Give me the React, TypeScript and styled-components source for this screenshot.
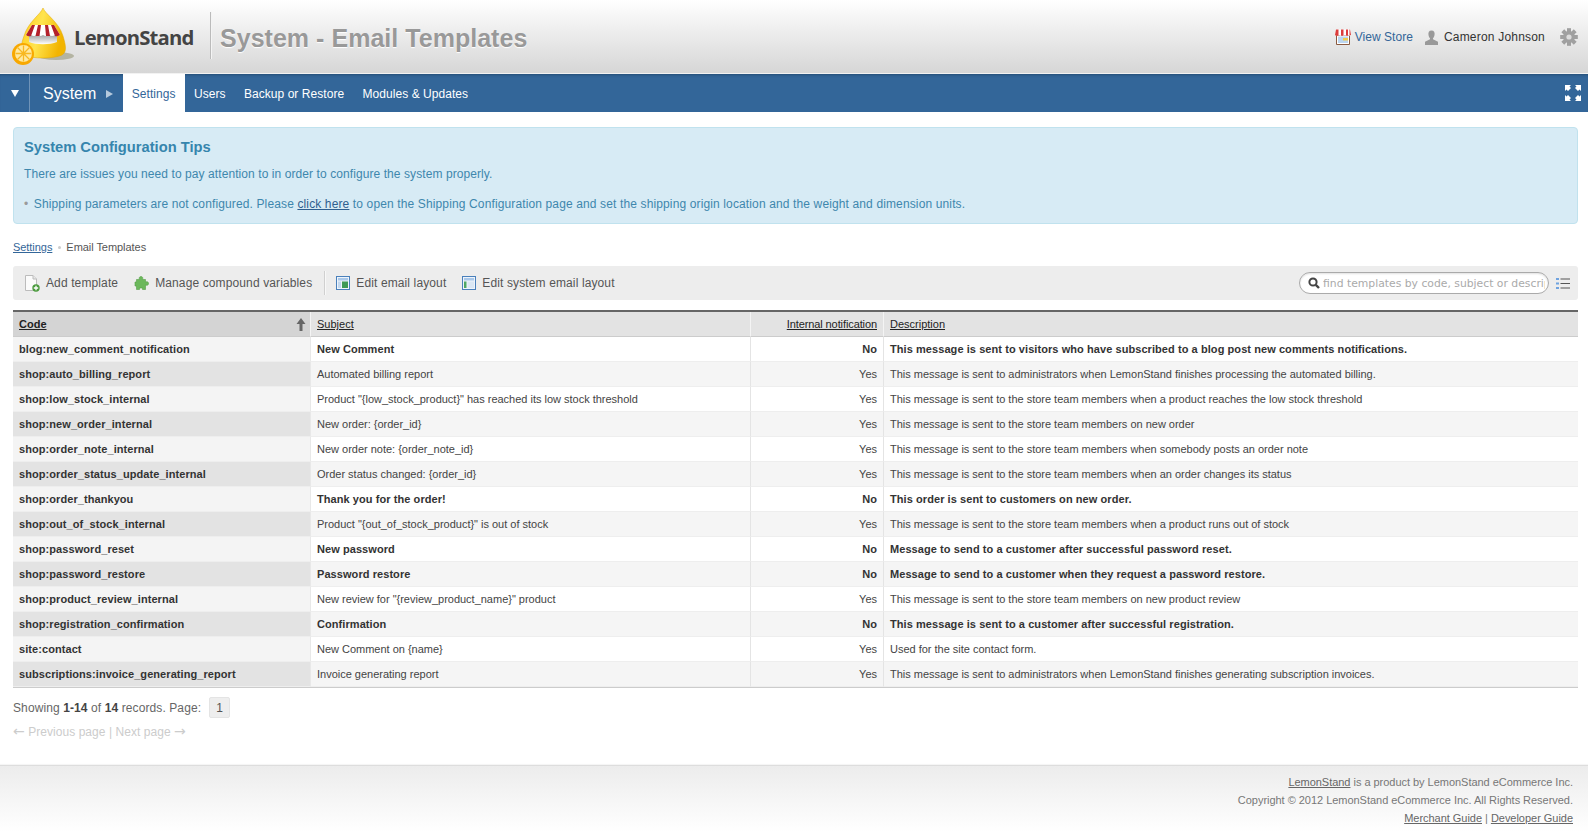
import React from "react";
import styled, { createGlobalStyle } from "styled-components";

const Global = createGlobalStyle`
  html, body { margin: 0; padding: 0; background: #fff; }
  body { font-family: "Liberation Sans", Arial, sans-serif; font-size: 12px; color: #444; }
`;

const Page = styled.div`
  width: 1588px; height: 832px; display: flex; flex-direction: column; overflow: hidden;
`;
const Header = styled.header`
  height: 73px; flex: none; display: flex; align-items: flex-start; justify-content: space-between;
  background: linear-gradient(#ffffff, #d6d6d6); border-bottom: 1px solid #f2f2f2; box-sizing: content-box;
`;
const Brand = styled.div`display: flex; align-items: flex-start; padding: 8px 0 0 12px;`;
const LogoText = styled.div`
  font-family: "Open Sans", "Liberation Sans", sans-serif; font-weight: 700; font-size: 20.3px; letter-spacing: -0.8px;
  color: #444; margin: 17px 0 0 0; line-height: 24px; width: 122px;
`;
const Divider = styled.div`width: 1px; height: 47px; background: #bbb; margin: 4px 0 0 14px; box-shadow: 1px 0 0 #f4f4f4;`;
const Title = styled.h1`
  margin: 14px 0 0 9px; font-size: 25px; line-height: 32px; font-weight: 700; color: #999; letter-spacing: .03px; text-shadow: 0 1px 1px #fff;
`;
const UserArea = styled.div`display: flex; align-items: center; height: 18px; margin: 28px 0 0 0; padding-right: 10px;`;
const StoreLink = styled.a`color: #336699; font-size: 12px; margin: 0 11px 0 4px; text-decoration: none; letter-spacing: .05px;`;
const UserName = styled.span`color: #333; font-size: 12px; margin: 0 15px 0 5px; letter-spacing: .2px;`;

const Nav = styled.nav`
  height: 38px; flex: none; display: flex; align-items: stretch; background: #336699; position: relative;
  box-shadow: inset 0 3px 3px -2px #244c75;
`;
const NavToggle = styled.div`
  width: 29px; display: flex; align-items: center; justify-content: center; border-right: 1px solid #6f93b8;
`;
const NavToggleArrow = styled.span`width: 0; height: 0; border-top: 7px solid #fff; border-left: 4px solid transparent; border-right: 4px solid transparent;`;
const NavSection = styled.div`
  display: flex; align-items: center; color: #fff; font-size: 16px; padding: 2px 0 0 13px; width: 80px; box-sizing: content-box;
  gap: 10px;
`;
const NavArrow = styled.span`width: 0; height: 0; border-left: 7px solid #b5c9dd; border-top: 4px solid transparent; border-bottom: 4px solid transparent;`;
const NavTab = styled.a<{ $active?: boolean }>`
  display: flex; align-items: center; padding: 2px 9.6px 0 8.8px; font-size: 12px; text-decoration: none; letter-spacing: .05px;
  color: ${(p) => (p.$active ? "#336699" : "#fff")}; background: ${(p) => (p.$active ? "#fff" : "transparent")};
`;
const NavExpand = styled.div`margin-left: auto; display: flex; align-items: center; padding-right: 7px;`;

const Content = styled.main`flex: 1; padding: 15px 10px 0 13px; display: flex; flex-direction: column;`;
const Tips = styled.section`
  height: 97px; box-sizing: border-box; background: #d7ebf5; border: 1px solid #c0e2ee; border-radius: 4px;
  padding: 11px 10px 0; color: #3e87ad;
`;
const TipsTitle = styled.h2`margin: 0; font-size: 14.7px; line-height: 17px; color: #3585ad; font-weight: 700;`;
const TipsText = styled.p`margin: 11px 0 0; font-size: 12px; line-height: 15px; letter-spacing: .08px; & + & { margin-top: 15px; letter-spacing: .13px; }`;
const TipsBullet = styled.span`color: #9a9a9a; margin-right: 2px;`;
const TipsLink = styled.a`color: #2f5f8f; text-decoration: underline;`;

const Crumbs = styled.div`margin-top: 16px; height: 14px; line-height: 14px; font-size: 11px; color: #555; display: flex; align-items: center; letter-spacing: -.05px;`;
const CrumbLink = styled.a`color: #336699; text-decoration: underline;`;
const CrumbDot = styled.span`width: 3px; height: 3px; border-radius: 50%; background: #ccc; margin: 0 5px 0 6px;`;

const Toolbar = styled.div`
  margin-top: 12px; height: 34px; background: #ededed; border-radius: 3px; display: flex; align-items: center; padding-left: 12px; flex: none;
`;
const ToolButton = styled.a`
  display: flex; align-items: center; gap: 6px; color: #555; font-size: 12px; margin-right: 16px; white-space: nowrap; letter-spacing: .12px;
`;
const ToolSep = styled.div`width: 1px; height: 24px; background: #d0d0d0; margin: 0 11px 0 -4px; box-shadow: 1px 0 0 #f8f8f8;`;
const ToolRight = styled.div`margin-left: auto; display: flex; align-items: center; padding-right: 8px;`;
const Search = styled.div`
  width: 250px; height: 22px; box-sizing: border-box; border: 1px solid #aaa; border-radius: 11px; background: #fff;
  display: flex; align-items: center; padding: 0 3px 0 8px; overflow: hidden; margin-right: 7px;
  box-shadow: inset 0 1px 2px rgba(0,0,0,.12);
`;
const SearchText = styled.span`
  font-family: "DejaVu Sans", sans-serif; font-size: 10.8px; color: #aaa; margin: 1px 0 0 3px; white-space: nowrap; overflow: hidden; flex: 1;
`;

const Table = styled.table`
  margin-top: 10px; width: 1565px; border-collapse: separate; border-spacing: 0; table-layout: fixed; border-top: 2px solid #666; border-bottom: 1px solid #ccc; flex: none;
`;
const Th = styled.th<{ $sorted?: boolean; $right?: boolean }>`
  height: 25px; box-sizing: border-box; padding: 0 6px; font-size: 11px; font-weight: ${(p) => (p.$sorted ? 700 : 400)};
  color: #222; text-decoration: underline; text-align: ${(p) => (p.$right ? "right" : "left")};
  letter-spacing: ${(p) => (p.$right ? "-.1px" : "0")};
  background: ${(p) => (p.$sorted ? "#d4d4d4" : "#e3e3e3")}; border-bottom: 1px solid #ccc; border-right: 1px solid #f4f4f4;
  position: relative; &:last-child { border-right: 0; }
`;
const SortArrow = styled.span`position: absolute; right: 4px; top: 6px; line-height: 0;`;
const CodeCell = styled.td<{ $odd: boolean }>`
  height: 25px; box-sizing: border-box; padding: 0 6px; font-size: 11px; font-weight: 700; color: #333; white-space: nowrap; letter-spacing: .07px;
  background: ${(p) => (p.$odd ? "#f4f4f4" : "#e3e3e3")}; border-bottom: 1px solid #eee; border-right: 1px solid #e8e8e8;
`;
const Td = styled.td<{ $odd: boolean; $bold: boolean; $right?: boolean }>`
  height: 25px; box-sizing: border-box; padding: 0 6px; font-size: 11px; white-space: nowrap; overflow: hidden;
  font-weight: ${(p) => (p.$bold ? 700 : 400)}; color: ${(p) => (p.$bold ? "#333" : "#444")};
  letter-spacing: ${(p) => (p.$bold ? ".07px" : "-.01px")}; text-align: ${(p) => (p.$right ? "right" : "left")};
  background: ${(p) => (p.$odd ? "#fff" : "#f5f5f5")}; border-bottom: 1px solid #eee; border-right: 1px solid #e4e4e4;
  &:last-child { border-right: 0; }
`;

const Pager = styled.div`margin-top: 9px; display: flex; align-items: center; height: 21px; color: #666; font-size: 12px; gap: 4px; letter-spacing: .1px;`;
const PagerStrong = styled.b`color: #444;`;
const PageBox = styled.span`
  width: 21px; height: 21px; background: #eee; border: 1px solid #e4e4e4; border-radius: 2px; box-sizing: border-box; margin-left: 4px;
  display: flex; align-items: center; justify-content: center; color: #555;
`;
const PrevNext = styled.div`margin-top: 6px; color: #ccc; font-size: 12px; line-height: 15px; letter-spacing: .05px;`;
const PagerArrow = styled.span`font-family: "DejaVu Sans", sans-serif; font-size: 14px; line-height: 14px;`;

const Footer = styled.footer`
  height: 67px; flex: none; box-sizing: border-box; border-top: 1px solid #ddd; background: linear-gradient(#ececec, #fff);
  text-align: right; padding: 7px 15px 0 0; font-size: 11px; line-height: 18px; color: #777; letter-spacing: -.03px;
  box-shadow: 0 -1px 1px rgba(0,0,0,.04);
`;
const FooterLink = styled.a`color: #666; text-decoration: underline;`;

type Row = [string, string, string, string];
const rows: Row[] = [
  ["blog:new_comment_notification", "New Comment", "No", "This message is sent to visitors who have subscribed to a blog post new comments notifications."],
  ["shop:auto_billing_report", "Automated billing report", "Yes", "This message is sent to administrators when LemonStand finishes processing the automated billing."],
  ["shop:low_stock_internal", 'Product "{low_stock_product}" has reached its low stock threshold', "Yes", "This message is sent to the store team members when a product reaches the low stock threshold"],
  ["shop:new_order_internal", "New order: {order_id}", "Yes", "This message is sent to the store team members on new order"],
  ["shop:order_note_internal", "New order note: {order_note_id}", "Yes", "This message is sent to the store team members when somebody posts an order note"],
  ["shop:order_status_update_internal", "Order status changed: {order_id}", "Yes", "This message is sent to the store team members when an order changes its status"],
  ["shop:order_thankyou", "Thank you for the order!", "No", "This order is sent to customers on new order."],
  ["shop:out_of_stock_internal", 'Product "{out_of_stock_product}" is out of stock', "Yes", "This message is sent to the store team members when a product runs out of stock"],
  ["shop:password_reset", "New password", "No", "Message to send to a customer after successful password reset."],
  ["shop:password_restore", "Password restore", "No", "Message to send to a customer when they request a password restore."],
  ["shop:product_review_internal", 'New review for "{review_product_name}" product', "Yes", "This message is sent to the store team members on new product review"],
  ["shop:registration_confirmation", "Confirmation", "No", "This message is sent to a customer after successful registration."],
  ["site:contact", "New Comment on {name}", "Yes", "Used for the site contact form."],
  ["subscriptions:invoice_generating_report", "Invoice generating report", "Yes", "This message is sent to administrators when LemonStand finishes generating subscription invoices."],
];

const LemonLogo = () => (
  <svg width="62" height="58" viewBox="0 0 62 58">
    <defs>
      <linearGradient id="lg" x1="0" x2="1" y1="0" y2="0.3">
        <stop offset="0" stopColor="#ffc91a" /><stop offset="0.5" stopColor="#ffe44e" /><stop offset="1" stopColor="#f2b400" />
      </linearGradient>
      <linearGradient id="wh" x1="0" x2="0" y1="0" y2="1"><stop offset="0" stopColor="#8f8f8f" /><stop offset="1" stopColor="#fff" /></linearGradient>
    </defs>
    <ellipse cx="44" cy="48" rx="18" ry="4" fill="#8f8f70" opacity=".55" />
    <path d="M31 0 C33 6 47 14 51 28 C54 38 55 44 50 47 C42 51 20 51 12 47 C8 44 9 36 12 28 C16 14 29 6 31 0 Z" fill="url(#lg)" stroke="#e3a800" strokeWidth=".5" />
    <path d="M17 25 H45 V34 C38 37 24 37 17 34 Z" fill="url(#wh)" />
    <path d="M14 27 L20 17 H42 L48 27 Q45 29 43 27 Q40 29 37 27 Q34 29 31 27 Q28 29 25 27 Q22 29 19 27 Q16 29 14 27 Z" fill="#fff" />
    <path d="M14 27 L20 17 H23 L19 28 Q16 29 14 27 Z M26 17 H29 L27.5 28 H23.5 Z M33 17 H36 L38 28 H34 Z M39 17 H42 L48 27 Q45 29 43 28 Z" fill="#b4202a" />
    <circle cx="11" cy="46" r="11" fill="#f8a800" />
    <circle cx="11.5" cy="45.5" r="8.5" fill="#ffe9a0" />
    <path d="M11.5 37.5 V53.5 M3.5 45.5 H19.5 M5.5 39.5 L17.5 51.5 M17.5 39.5 L5.5 51.5" stroke="#f8b820" strokeWidth="1.3" />
  </svg>
);

const StoreIcon = () => (
  <svg width="16" height="16" viewBox="0 0 16 16">
    <path d="M1.5 6 H14.5 V15.5 H1.5 Z" fill="#fff" stroke="#8a5a40" />
    <rect x="3" y="7.5" width="10" height="6.5" fill="#bcd6f0" />
    <rect x="8" y="9" width="5" height="2.5" fill="#f0cc50" />
    <path d="M1 .5 H15 L16 6 Q14.5 7.5 13 6 Q11.5 7.5 10 6 Q8.5 7.5 7 6 Q5.5 7.5 4 6 Q2 7.5 0 6 Z" fill="#fff" />
    <path d="M1 .5 H3.5 V6.5 Q1.5 7.5 0 6 Z M6 .5 H8.5 V6.5 Q7 7.2 6 6.5 Z M11 .5 H13 V6.5 Q12 7 11 6.5 Z M14.5 .5 H15 L16 6 L14.5 6.5 Z" fill="#dc3c3c" />
  </svg>
);
const UserIcon = () => (
  <svg width="15" height="15" viewBox="0 0 15 15">
    <path d="M7.5 0.5 C10 0.5 11 2.5 10.5 5 C10.3 6.5 9.6 7.6 9 8.2 V9.3 L14 11.7 V15 H1 V11.7 L6 9.3 V8.2 C5.4 7.6 4.7 6.5 4.5 5 C4 2.5 5 0.5 7.5 0.5 Z" fill="#999" />
  </svg>
);
const GearIcon = () => (
  <svg width="18" height="18" viewBox="0 0 18 18">
    <g fill="#a0a0a0">
      {[0, 45, 90, 135, 180, 225, 270, 315].map((a) => (
        <rect key={a} x="7" y="0.2" width="4" height="4.5" transform={`rotate(${a} 9 9)`} />
      ))}
    </g>
    <circle cx="9" cy="9" r="6" fill="#a0a0a0" />
    <circle cx="9" cy="9" r="2.6" fill="#dcdcdc" />
  </svg>
);
const ExpandIcon = () => (
  <svg width="16" height="16" viewBox="0 0 16 16" fill="#fff">
    <path d="M0 0 H6 L4.5 1.5 L6 3 L3 6 L1.5 4.5 L0 6 Z" />
    <path d="M16 0 V6 L14.5 4.5 L13 6 L10 3 L11.5 1.5 L10 0 Z" />
    <path d="M0 16 V10 L1.5 11.5 L3 10 L6 13 L4.5 14.5 L6 16 Z" />
    <path d="M16 16 H10 L11.5 14.5 L10 13 L13 10 L14.5 11.5 L16 10 Z" />
  </svg>
);
const AddIcon = () => (
  <svg width="15" height="17" viewBox="0 0 15 17">
    <path d="M.5 .5 H8 L11.5 4 V15.5 H.5 Z" fill="#fbfbfb" stroke="#bcbcbc" />
    <path d="M8 .5 V4 H11.5" fill="#e8e8e8" stroke="#bcbcbc" />
    <circle cx="11" cy="13" r="3.7" fill="#4a9a3c" />
    <path d="M11 10.8 V15.2 M8.8 13 H13.2" stroke="#fff" strokeWidth="1.3" />
  </svg>
);
const PuzzleIcon = () => (
  <svg width="15" height="15" viewBox="0 0 15 15">
    <path d="M2.5 3.5 H5.5 C4.8 2.2 5.2 .6 7 .6 C8.8 .6 9.2 2.2 8.5 3.5 H11.5 V6 C12.8 5.3 14.6 5.8 14.6 7.5 C14.6 9.2 12.8 9.7 11.5 9 V13.5 H8.5 V12 H5.5 V13.5 H2.5 V10 H1 V6 H2.5 Z" fill="#6cb85c" stroke="#55a048" strokeWidth=".6" />
  </svg>
);
const LayoutIcon = ({ variant }: { variant: "right" | "left" }) => (
  <svg width="14" height="14" viewBox="0 0 14 14">
    <rect x=".5" y=".5" width="13" height="13" fill="#eef4fb" stroke="#4a80bb" />
    <rect x="2" y="2" width="10" height="2.5" fill="#a9c8ea" />
    {variant === "right" ? (
      <>
        <rect x="2" y="5.5" width="3" height="6.5" fill="#c3d8ef" />
        <rect x="6" y="5.5" width="6" height="6.5" fill="#3f9a55" />
      </>
    ) : (
      <>
        <rect x="2" y="5.5" width="2.5" height="6.5" fill="#4fa765" />
        <rect x="5.5" y="5.5" width="6.5" height="6.5" fill="#dbe7f4" />
      </>
    )}
  </svg>
);
const SearchIcon = () => (
  <svg width="12" height="12" viewBox="0 0 12 12">
    <circle cx="5" cy="5" r="3.6" fill="none" stroke="#444" strokeWidth="2" />
    <path d="M7.8 7.8 L11 11" stroke="#444" strokeWidth="2.4" />
  </svg>
);
const ListIcon = () => (
  <svg width="14" height="13" viewBox="0 0 14 13">
    <g fill="#6fa3e0"><rect x="0" y="1" width="3" height="2" /><rect x="0" y="5.5" width="3" height="2" /><rect x="0" y="10" width="3" height="2" /></g>
    <g fill="#555"><rect x="4.5" y="1.5" width="9.5" height="1" /><rect x="4.5" y="6" width="9.5" height="1" /><rect x="4.5" y="10.5" width="9.5" height="1" /></g>
  </svg>
);

export default function App() {
  return (
    <Page>
      <Global />
      <Header>
        <Brand>
          <LemonLogo />
          <LogoText>LemonStand</LogoText>
          <Divider />
          <Title>System - Email Templates</Title>
        </Brand>
        <UserArea>
          <StoreIcon />
          <StoreLink>View Store</StoreLink>
          <UserIcon />
          <UserName>Cameron Johnson</UserName>
          <GearIcon />
        </UserArea>
      </Header>
      <Nav>
        <NavToggle><NavToggleArrow /></NavToggle>
        <NavSection>System <NavArrow /></NavSection>
        <NavTab $active>Settings</NavTab>
        <NavTab>Users</NavTab>
        <NavTab>Backup or Restore</NavTab>
        <NavTab>Modules &amp; Updates</NavTab>
        <NavExpand><ExpandIcon /></NavExpand>
      </Nav>
      <Content>
        <Tips>
          <TipsTitle>System Configuration Tips</TipsTitle>
          <TipsText>There are issues you need to pay attention to in order to configure the system properly.</TipsText>
          <TipsText>
            <TipsBullet>•</TipsBullet> Shipping parameters are not configured. Please <TipsLink>click here</TipsLink> to open the Shipping Configuration page and set the shipping origin location and the weight and dimension units.
          </TipsText>
        </Tips>
        <Crumbs>
          <CrumbLink>Settings</CrumbLink>
          <CrumbDot />
          Email Templates
        </Crumbs>
        <Toolbar>
          <ToolButton><AddIcon />Add template</ToolButton>
          <ToolButton><PuzzleIcon />Manage compound variables</ToolButton>
          <ToolSep />
          <ToolButton><LayoutIcon variant="right" />Edit email layout</ToolButton>
          <ToolButton><LayoutIcon variant="left" />Edit system email layout</ToolButton>
          <ToolRight>
            <Search>
              <SearchIcon />
              <SearchText>find templates by code, subject or description</SearchText>
            </Search>
            <ListIcon />
          </ToolRight>
        </Toolbar>
        <Table>
          <colgroup>
            <col width="298" />
            <col width="440" />
            <col width="133" />
            <col />
          </colgroup>
          <thead>
            <tr>
              <Th $sorted>
                Code
                <SortArrow>
                  <svg width="10" height="13" viewBox="0 0 10 13"><path d="M5 0 L9.5 6 H6.5 V13 H3.5 V6 H.5 Z" fill="#666" /></svg>
                </SortArrow>
              </Th>
              <Th>Subject</Th>
              <Th $right>Internal notification</Th>
              <Th>Description</Th>
            </tr>
          </thead>
          <tbody>
            {rows.map(([code, subject, internal, desc], i) => {
              const odd = i % 2 === 0;
              const bold = internal === "No";
              return (
                <tr key={code}>
                  <CodeCell $odd={odd}>{code}</CodeCell>
                  <Td $odd={odd} $bold={bold}>{subject}</Td>
                  <Td $odd={odd} $bold={bold} $right>{internal}</Td>
                  <Td $odd={odd} $bold={bold}>{desc}</Td>
                </tr>
              );
            })}
          </tbody>
        </Table>
        <Pager>
          <span>Showing <PagerStrong>1-14</PagerStrong> of <PagerStrong>14</PagerStrong> records. Page:</span>
          <PageBox>1</PageBox>
        </Pager>
        <PrevNext><PagerArrow>←</PagerArrow> Previous page | Next page <PagerArrow>→</PagerArrow></PrevNext>
      </Content>
      <Footer>
        <div><FooterLink>LemonStand</FooterLink> is a product by LemonStand eCommerce Inc.</div>
        <div>Copyright © 2012 LemonStand eCommerce Inc. All Rights Reserved.</div>
        <div><FooterLink>Merchant Guide</FooterLink> | <FooterLink>Developer Guide</FooterLink></div>
      </Footer>
    </Page>
  );
}
